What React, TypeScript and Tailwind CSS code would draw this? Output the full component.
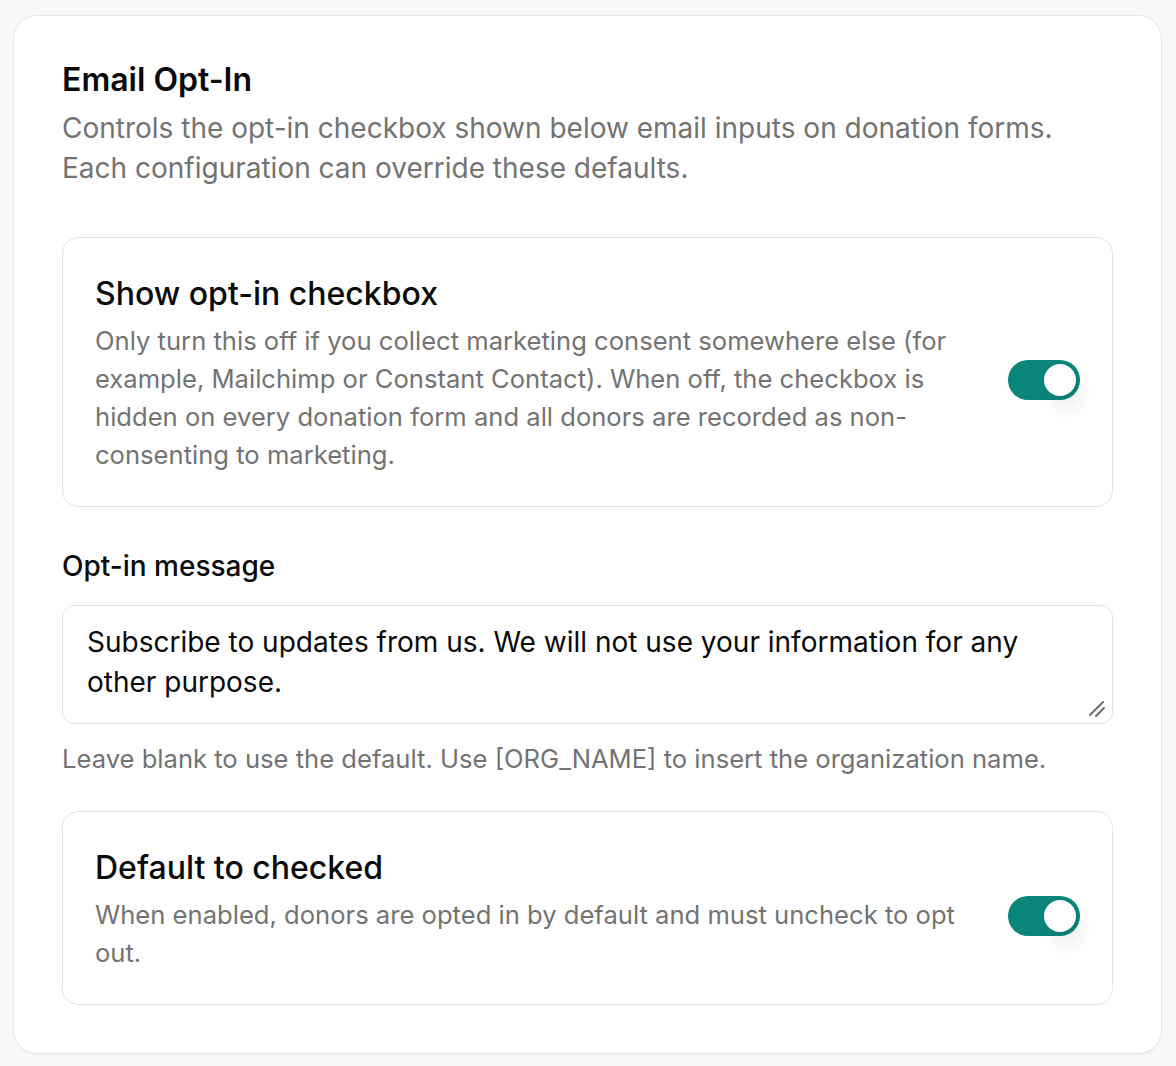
import React from "react";

function Toggle() {
  return (
    <div className="relative mt-[16px] h-[40px] w-[72px] shrink-0 rounded-full bg-[#0a857a]">
      <div className="absolute right-[4px] top-[4px] h-[32px] w-[32px] rounded-full bg-white shadow-[6px_14px_18px_rgba(0,0,0,0.07)]" />
    </div>
  );
}

function SettingBox({ title, desc }: { title: string; desc: string }) {
  return (
    <div className="flex items-center gap-[40px] rounded-[16px] border border-[#e4e4e7] bg-white p-[32px]">
      <div className="flex-1">
        <div className="text-[32px] font-medium leading-[48px] text-[#0a0a0a]">{title}</div>
        <p className="mt-[4px] text-[25.6px] leading-[38px] text-[#737373]">{desc}</p>
      </div>
      <Toggle />
    </div>
  );
}

export default function App() {
  return (
    <div
      className="min-h-[1066px] bg-[#f7f8fa] pl-[13px] pr-[14px] pt-[15px]"
      style={{ fontFamily: "Inter, 'Noto Sans', sans-serif" }}
    >
      <div className="rounded-[24px] border border-[#e5e7eb] bg-white px-[48px] pb-[48px] pt-[40px] shadow-[0_1px_3px_rgba(0,0,0,0.04)]">
        <h2 className="text-[32px] font-semibold leading-[48px] text-[#0a0a0a]">Email Opt-In</h2>
        <p className="mt-[4px] text-[28px] leading-[40px] text-[#737373]">
          Controls the opt-in checkbox shown below email inputs on donation forms. Each configuration can override these defaults.
        </p>

        <div className="mt-[49px]">
          <SettingBox
            title="Show opt-in checkbox"
            desc="Only turn this off if you collect marketing consent somewhere else (for example, Mailchimp or Constant Contact). When off, the checkbox is hidden on every donation form and all donors are recorded as non-consenting to marketing."
          />
        </div>

        <div className="mt-[39px]">
          <label className="block text-[28px] font-medium leading-[40px] text-[#0a0a0a]">Opt-in message</label>
          <div className="relative mt-[19px]">
            <textarea
              className="block h-[119px] w-full resize-none rounded-[12px] border border-[#e4e4e7] bg-white px-[24px] pt-[16px] text-[28px] leading-[40px] text-[#0a0a0a] outline-none"
              defaultValue="Subscribe to updates from us. We will not use your information for any other purpose."
            />
            <svg
              className="pointer-events-none absolute bottom-[6px] right-[7px]"
              width="18"
              height="18"
              viewBox="0 0 18 18"
            >
              <line x1="2" y1="15" x2="15" y2="2" stroke="#6b6b6b" strokeWidth="2" strokeLinecap="round" />
              <line x1="8" y1="16" x2="16" y2="8" stroke="#6b6b6b" strokeWidth="2" strokeLinecap="round" />
            </svg>
          </div>
          <p className="mt-[15px] text-[25.6px] leading-[40px] text-[#737373]">
            Leave blank to use the default. Use [ORG_NAME] to insert the organization name.
          </p>
        </div>

        <div className="mt-[32px]">
          <SettingBox
            title="Default to checked"
            desc="When enabled, donors are opted in by default and must uncheck to opt out."
          />
        </div>
      </div>
    </div>
  );
}
